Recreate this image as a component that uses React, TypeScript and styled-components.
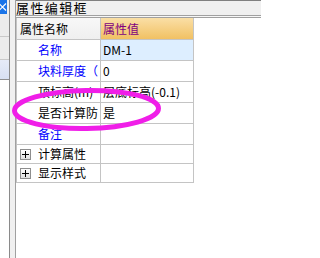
import React from "react";
import styled, { createGlobalStyle, css } from "styled-components";

const GlobalStyle = createGlobalStyle`
  html, body {
    margin: 0;
    padding: 0;
    background: #ffffff;
    overflow: hidden;
  }
  #root {
    width: 261px;
    height: 258px;
  }
`;

const cjk = `"Noto Sans CJK SC", "Noto Sans", sans-serif`;

const Screen = styled.div`
  position: relative;
  display: flex;
  width: 261px;
  height: 258px;
  font-family: ${cjk};
  font-size: 12px;
  color: #000000;
`;

/* cut-off panel on the left */
const LeftPane = styled.div`
  width: 9px;
  display: flex;
  flex-direction: column;
  border-right: 1px solid #8a8a8a;
  background: #ffffff;
`;

const LeftHeader = styled.div`
  height: 14px;
  display: flex;
  background: #f0f0f0;
`;

const CloseBox = styled.div`
  width: 7px;
  height: 14px;
  background: #1a74e8;
  display: flex;
  align-items: center;
`;

const ListItem = styled.div<{ $selected?: boolean }>`
  height: 22px;
  border-bottom: 1px solid #c9c9c9;
  background: #ececec;
  ${({ $selected }) =>
    $selected &&
    css`
      height: 19px;
      background: linear-gradient(#e6ebf7, #d8e0f2);
      border-bottom: 1px solid #8f8f8f;
    `}
`;

const Splitter = styled.div`
  width: 6px;
  background: #f0f0f0;
`;

const Main = styled.div`
  flex: 1;
  display: flex;
  flex-direction: column;
  border-left: 1px solid #a0a0a0;
  margin-left: -1px;
`;

const TitleBar = styled.div`
  height: 14px;
  line-height: 14px;
  border-top: 1px solid #808080;
  border-bottom: 1px solid #a0a0a0;
  background: #f0f0f0;
  font-size: 13px;
  letter-spacing: 1.4px;
  white-space: nowrap;
`;

const TitleGap = styled.div`
  height: 1px;
  background: #f7f7f7;
`;

const Content = styled.div`
  flex: 1;
  border-top: 1px solid #a0a0a0;
  background: #ffffff;
  display: flex;
  flex-direction: column;
  align-items: flex-start;
`;

const Grid = styled.div`
  display: flex;
  flex-direction: column;
  border-left: 1px solid #c4c4c4;
`;

const Row = styled.div<{ $kind: "head" | "data" | "group" }>`
  display: flex;
  height: ${({ $kind }) => ($kind === "head" ? 21 : $kind === "group" ? 18 : 20)}px;
  line-height: ${({ $kind }) => ($kind === "head" ? 21 : $kind === "group" ? 18 : 20)}px;
  border-bottom: 1px solid #c4c4c4;
`;

const NameCell = styled.div<{ $indent: number; $color?: string; $head?: boolean }>`
  width: 84px;
  box-sizing: border-box;
  padding-left: ${({ $indent }) => $indent}px;
  padding-right: 3px;
  border-right: 1px solid #c4c4c4;
  color: ${({ $color }) => $color || "#000000"};
  background: ${({ $head }) => ($head ? "linear-gradient(#f8f8f8, #efefef)" : "#ffffff")};
  white-space: nowrap;
  overflow: hidden;
  display: flex;
  align-items: center;
  gap: 7px;
`;

const ValueCell = styled.div<{ $head?: boolean; $selected?: boolean }>`
  width: 93px;
  box-sizing: border-box;
  padding-left: 2px;
  border-right: 1px solid #c4c4c4;
  white-space: nowrap;
  overflow: hidden;
  color: ${({ $head }) => ($head ? "#800080" : "#000000")};
  background: ${({ $head, $selected }) =>
    $head ? "linear-gradient(#fadfa6, #f1c163)" : $selected ? "#ddeeff" : "#ffffff"};
`;

const ExpandBox = styled.span`
  width: 11px;
  height: 11px;
  box-sizing: border-box;
  border: 1px solid #8e8e8e;
  background: linear-gradient(#ffffff, #dedede);
  display: inline-flex;
  align-items: center;
  justify-content: center;
  flex: none;
`;

const Mark = styled.svg`
  position: absolute;
  left: 0;
  top: 0;
  pointer-events: none;
`;

type Prop = {
  name: string;
  value: string;
  blue?: boolean;
  selected?: boolean;
};

const props: Prop[] = [
  { name: "名称", value: "DM-1", blue: true, selected: true },
  { name: "块料厚度（", value: "0", blue: true },
  { name: "顶标高(m)", value: "层底标高(-0.1)" },
  { name: "是否计算防", value: "是" },
  { name: "备注", value: "", blue: true },
];

const groups = ["计算属性", "显示样式"];

const Plus = () => (
  <ExpandBox>
    <svg width="7" height="7" viewBox="0 0 7 7">
      <path d="M0 3.5H7M3.5 0V7" stroke="#000" strokeWidth="1" />
    </svg>
  </ExpandBox>
);

export default function App() {
  return (
    <>
      <GlobalStyle />
      <Screen>
        <LeftPane>
          <LeftHeader>
            <CloseBox>
              <svg width="7" height="14" viewBox="0 0 7 14">
                <path d="M-1 3.5L6 10.5M6 3.5L-1 10.5" stroke="#ffffff" strokeWidth="1.2" />
              </svg>
            </CloseBox>
          </LeftHeader>
          <ListItem />
          <ListItem />
          <ListItem $selected />
        </LeftPane>
        <Splitter />
        <Main>
          <TitleBar>属性编辑框</TitleBar>
          <TitleGap />
          <Content>
            <Grid>
              <Row $kind="head">
                <NameCell $indent={3} $head>属性名称</NameCell>
                <ValueCell $head>属性值</ValueCell>
              </Row>
              {props.map((p) => (
                <Row $kind="data" key={p.name}>
                  <NameCell $indent={21} $color={p.blue ? "#0000ff" : "#000000"}>
                    {p.name}
                  </NameCell>
                  <ValueCell $selected={p.selected}>{p.value}</ValueCell>
                </Row>
              ))}
              {groups.map((g) => (
                <Row $kind="group" key={g}>
                  <NameCell $indent={3}>
                    <Plus />
                    {g}
                  </NameCell>
                  <ValueCell />
                </Row>
              ))}
            </Grid>
          </Content>
        </Main>
        <Mark width="261" height="258" viewBox="0 0 261 258">
          <ellipse
            cx="86.5"
            cy="109.5"
            rx="72"
            ry="19"
            fill="none"
            stroke="#f01ee8"
            strokeWidth="5"
            transform="rotate(-1 86.5 109.5)"
          />
        </Mark>
      </Screen>
    </>
  );
}
